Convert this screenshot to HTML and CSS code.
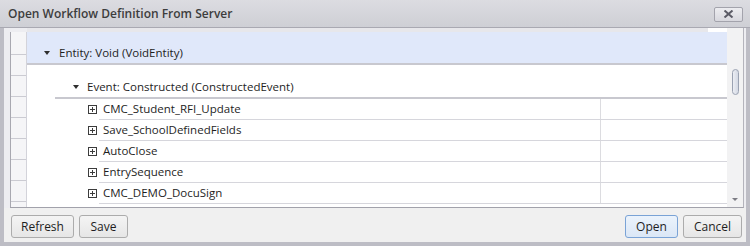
FILE: index.html
```html
<!DOCTYPE html>
<html lang="en">
<head>
  <meta charset="UTF-8">
  <title>Open Workflow Definition From Server</title>
  <link rel="stylesheet" href="styles.css">
</head>
<body>
  <div class="window">
    <div class="titlebar">
      <span class="title">Open Workflow Definition From Server</span>
      <button class="close" aria-label="Close">
        <svg width="11" height="8" viewBox="0 0 11 8"><path d="M1.5 0.5 L9.5 7.5 M9.5 0.5 L1.5 7.5" stroke="#5b5b66" stroke-width="2"/></svg>
      </button>
    </div>

    <div class="frame">
      <div class="panel">
        <div class="gutter">
          <div class="cell first"></div>
          <div class="cell"></div>
          <div class="cell"></div>
          <div class="cell"></div>
          <div class="cell"></div>
          <div class="cell"></div>
          <div class="cell"></div>
          <div class="cell"></div>
        </div>

        <div class="tree">
          <div class="strip"></div>
          <div class="entity-row">
            <span class="caret"></span>
            <span>Entity: Void (VoidEntity)</span>
          </div>
          <div class="event-row">
            <span class="caret"></span>
            <span>Event: Constructed (ConstructedEvent)</span>
          </div>
          <div class="items"></div>
        </div>

        <div class="scrollbar">
          <div class="thumb"></div>
          <div class="arrow"></div>
        </div>
      </div>

      <div class="actions">
        <div class="group">
          <button class="btn refresh">Refresh</button>
          <button class="btn save">Save</button>
        </div>
        <div class="group">
          <button class="btn open default">Open</button>
          <button class="btn cancel">Cancel</button>
        </div>
      </div>
    </div>
  </div>

  <script>
    const workflows = [
      'CMC_Student_RFI_Update',
      'Save_SchoolDefinedFields',
      'AutoClose',
      'EntrySequence',
      'CMC_DEMO_DocuSign'
    ];
    const items = document.querySelector('.items');

    workflows.forEach(name => {
      const row = document.createElement('div');
      row.className = 'item';
      row.innerHTML = `
        <svg class="expander" width="9" height="9" viewBox="0 0 9 9">
          <rect x="0.5" y="0.5" width="8" height="8" fill="#fff" stroke="#3c3c3c"/>
          <path d="M2 4.5 H7 M4.5 2 V7" stroke="#3c3c3c"/>
        </svg>
        <div class="cells">
          <div class="name">${name}</div>
          <div class="extra"></div>
        </div>
      `;
      items.appendChild(row);
    });
  </script>
</body>
</html>
```

FILE: styles.css
```css
body {
  margin: 0;
  font-family: 'Open Sans', 'Noto Sans', sans-serif;
  font-size: 11.5px;
  color: #1e1e1e;
}
.window {
  width: 750px;
  height: 246px;
  display: flex;
  flex-direction: column;
  background: #bdbdc5;
}
.titlebar {
  height: 27px;
  border-bottom: 1px solid #a9a9b2;
  background: linear-gradient(#dcdce1, #cecfd5);
  display: flex;
  align-items: center;
  justify-content: space-between;
  padding: 0 7px 0 8px;
}
.title {
  font-weight: 600;
  font-size: 12px;
  color: #3d3d3d;
}
.close {
  width: 29px;
  height: 15px;
  margin-top: 1px;
  padding: 0;
  border: 1px solid #a3a3ac;
  border-radius: 2px;
  background: linear-gradient(#ececf0, #d8d8de);
  display: flex;
  align-items: center;
  justify-content: center;
}
.frame {
  flex: 1;
  display: flex;
  flex-direction: column;
  border: 4px solid #bdbdc5;
  border-top: none;
  padding-right: 2px;
  padding-left: 6px;
  background: #ededf1;
}
.panel {
  display: flex;
  height: 179px;
  border-bottom: 1px solid #a2a2ab;
  border-right: 1px solid #b4b4bc;
}
.gutter {
  width: 15px;
  margin-top: 4px;
  border-left: 1px solid #a8a8b0;
  border-right: 1px solid #d3d3da;
  background: #f5f5f7;
  display: flex;
  flex-direction: column;
}
.cell {
  height: 20px;
  border-bottom: 1px solid #cbcbd2;
}
.cell.first {
  height: 22px;
}
.tree {
  flex: 1;
  background: #fff;
  display: flex;
  flex-direction: column;
  overflow: hidden;
}
.strip {
  height: 4px;
  background: linear-gradient(to right, #e7e7eb calc(100% - 19px), #fff 0);
}
.caret {
  width: 0;
  height: 0;
  border-left: 3.5px solid transparent;
  border-right: 3.5px solid transparent;
  border-top: 4px solid #2e2e2e;
  margin-bottom: 6px;
}
.entity-row {
  height: 33px;
  box-sizing: border-box;
  background: #e0e8fa;
  border-bottom: 2px solid #c8c8cf;
  display: flex;
  align-items: flex-end;
  padding: 0 0 2px 17px;
  line-height: 16px;
}
.entity-row .caret {
  margin-right: 9px;
}
.event-row {
  height: 34px;
  box-sizing: border-box;
  margin-left: 28px;
  border-bottom: 2px solid #c8c8cf;
  display: flex;
  align-items: flex-end;
  padding: 0 0 2px 18px;
  line-height: 16px;
}
.event-row .caret {
  margin-right: 8px;
}
.items {
  display: flex;
  flex-direction: column;
}
.item {
  display: flex;
  align-items: center;
  height: 21px;
  padding-left: 61px;
}
.expander {
  flex: none;
  margin-right: 2px;
}
.cells {
  flex: 1;
  display: flex;
  height: 21px;
  box-sizing: border-box;
  border-bottom: 1px solid #d6d6dc;
}
.name {
  width: 497px;
  padding-left: 4px;
  border-right: 1px solid #dcdce0;
  line-height: 20px;
}
.extra {
  flex: 1;
}
.scrollbar {
  width: 16px;
  background: #f2f2f3;
  display: flex;
  flex-direction: column;
  align-items: center;
}
.thumb {
  width: 5px;
  height: 24px;
  margin-top: 41px;
  border: 1px solid #9aa2b2;
  border-radius: 4px;
  background: linear-gradient(to right, #eceef4, #d4d9e4);
}
.arrow {
  margin-top: auto;
  margin-bottom: 6px;
  width: 0;
  height: 0;
  border-left: 3px solid transparent;
  border-right: 3px solid transparent;
  border-top: 3px solid #7c7c84;
}
.actions {
  flex: 1;
  display: flex;
  justify-content: space-between;
  margin: 0 -2px 0 -6px;
  padding: 7px 4px 0 7px;
  background: #f0f0f0;
}
.group {
  display: flex;
  gap: 5px;
  align-items: flex-start;
}
.btn {
  height: 23px;
  padding: 0;
  font-family: 'Open Sans', 'Noto Sans', sans-serif;
  font-size: 12px;
  color: #1e1e1e;
  border: 1px solid #acacac;
  border-radius: 3px;
  background: linear-gradient(#f4f4f4, #e6e6e6);
}
.refresh { width: 63px; }
.save { width: 49px; }
.open { width: 53px; }
.cancel { width: 59px; }
.btn.default {
  border-color: #7aa3d6;
  background: linear-gradient(#ebf3fc, #dbe7f6);
}
```
